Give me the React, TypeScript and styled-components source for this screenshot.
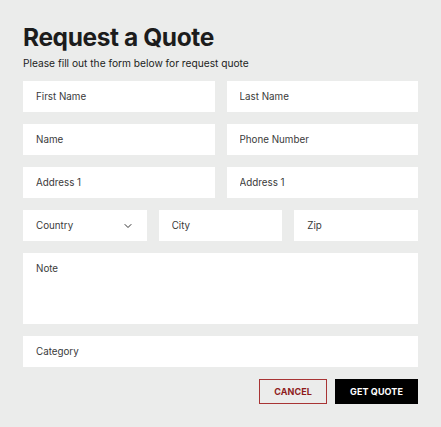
import React from "react";
import styled, { createGlobalStyle } from "styled-components";
import { ChevronDown } from "lucide-react";

const GlobalStyle = createGlobalStyle`
  html, body {
    margin: 0;
    padding: 0;
    background: #ebeceb;
  }
  body {
    font-family: Inter, "Liberation Sans", sans-serif;
  }
`;

const Page = styled.div`
  width: 441px;
  height: 427px;
  box-sizing: border-box;
  padding: 22px 23px 0 23px;
  background: #ebeceb;
`;

const Title = styled.h1`
  margin: 0;
  font-size: 24.5px;
  line-height: 30px;
  font-weight: 700;
  color: #1c1c1c;
  letter-spacing: -0.4px;
`;

const Subtitle = styled.p`
  margin: 4px 0 0 0;
  font-size: 10.2px;
  line-height: 14px;
  color: #1c1c1c;
`;

const Form = styled.form`
  margin-top: 11px;
  display: flex;
  flex-direction: column;
  gap: 12px;
`;

const Row = styled.div<{ $cols: number }>`
  display: grid;
  grid-template-columns: repeat(${(p) => p.$cols}, 1fr);
  gap: 12px;
`;

const Field = styled.input`
  box-sizing: border-box;
  width: 100%;
  height: 31px;
  border: none;
  outline: none;
  background: #ffffff;
  padding: 0 13px;
  font-family: Inter, "Liberation Sans", sans-serif;
  font-size: 9.8px;
  color: #333;
  &::placeholder {
    color: #3a3a3a;
  }
`;

const Note = styled.textarea`
  box-sizing: border-box;
  width: 100%;
  height: 71px;
  border: none;
  outline: none;
  resize: none;
  background: #ffffff;
  padding: 10px 13px;
  font-family: Inter, "Liberation Sans", sans-serif;
  font-size: 9.8px;
  color: #333;
  &::placeholder {
    color: #3a3a3a;
  }
`;

const Select = styled.div`
  box-sizing: border-box;
  height: 31px;
  background: #ffffff;
  padding: 0 13px;
  display: flex;
  align-items: center;
  justify-content: space-between;
  font-size: 9.8px;
  color: #3a3a3a;
`;

const Actions = styled.div`
  display: flex;
  justify-content: flex-end;
  gap: 8px;
`;

const Button = styled.button<{ $primary?: boolean }>`
  box-sizing: border-box;
  height: 25px;
  padding: 0 14px;
  font-family: Inter, "Liberation Sans", sans-serif;
  font-size: 9px;
  font-weight: 700;
  letter-spacing: 0.1px;
  cursor: pointer;
  background: ${(p) => (p.$primary ? "#000" : "transparent")};
  color: ${(p) => (p.$primary ? "#fff" : "#8e1b1b")};
  border: 1px solid ${(p) => (p.$primary ? "#000" : "#a83434")};
`;

export default function App() {
  return (
    <Page>
      <GlobalStyle />
      <Title>Request a Quote</Title>
      <Subtitle>Please fill out the form below for request quote</Subtitle>
      <Form onSubmit={(e) => e.preventDefault()}>
        <Row $cols={2}>
          <Field placeholder="First Name" />
          <Field placeholder="Last Name" />
        </Row>
        <Row $cols={2}>
          <Field placeholder="Name" />
          <Field placeholder="Phone Number" />
        </Row>
        <Row $cols={2}>
          <Field placeholder="Address 1" />
          <Field placeholder="Address 1" />
        </Row>
        <Row $cols={3}>
          <Select>
            <span>Country</span>
            <ChevronDown size={12} strokeWidth={2} color="#333" />
          </Select>
          <Field placeholder="City" />
          <Field placeholder="Zip" />
        </Row>
        <Note placeholder="Note" />
        <Field placeholder="Category" />
        <Actions>
          <Button type="button">CANCEL</Button>
          <Button type="submit" $primary>
            GET QUOTE
          </Button>
        </Actions>
      </Form>
    </Page>
  );
}
